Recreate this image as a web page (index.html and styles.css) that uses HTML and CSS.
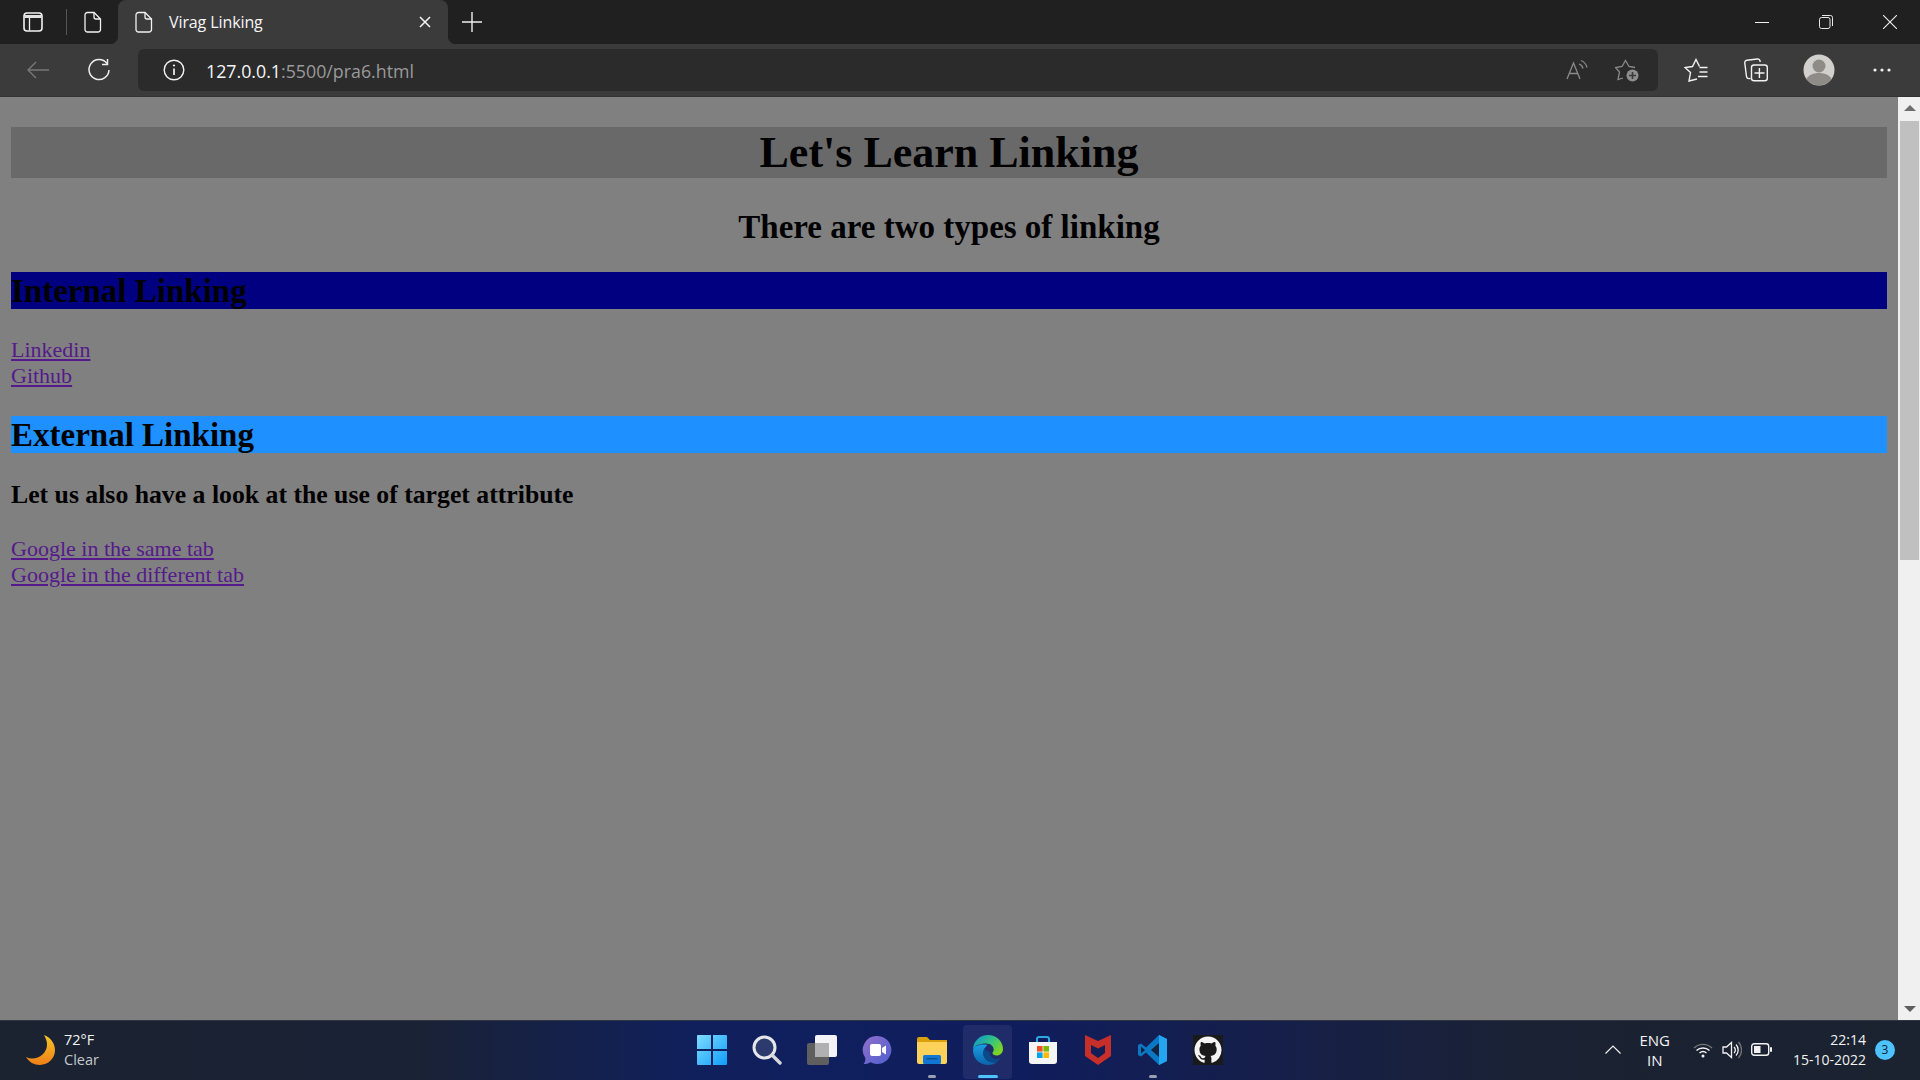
FILE: index.html
```html
<!DOCTYPE html>
<html lang="en">
<head>
    <meta charset="UTF-8">
    <title>Virag Linking</title>
    <link rel="stylesheet" href="styles.css">
</head>
<body>
    <div class="tabstrip">
        <div class="strip-icon side-icon">
            <svg width="20" height="20" viewBox="0 0 20 20" fill="none" stroke="#f2f2f2" stroke-width="1.600"><rect x="1" y="1" width="18" height="18" rx="3"/><path d="M1.500 4.500h17" stroke-width="3" stroke="#e2e2e2"/><path d="M6.500 6v12.500" stroke-width="1.300"/></svg>
        </div>
        <div class="strip-sep"></div>
        <div class="strip-icon page-icon">
            <svg width="18" height="22" viewBox="0 0 18 22" fill="none" stroke="#f2f2f2" stroke-width="1.300"><path d="M3.500 1.500h6.500l6.500 6.500v10.500a2.500 2.500 0 0 1-2.500 2.500h-10.500a2.500 2.500 0 0 1-2.500-2.500v-14.500a2.500 2.500 0 0 1 2.500-2.500z"/><path d="M10 1.500v4.500a2 2 0 0 0 2 2h4.500"/></svg>
        </div>
        <div class="tab">
            <svg width="18" height="22" viewBox="0 0 18 22" fill="none" stroke="#f2f2f2" stroke-width="1.300"><path d="M3.500 1.500h6.500l6.500 6.500v10.500a2.500 2.500 0 0 1-2.500 2.500h-10.500a2.500 2.500 0 0 1-2.500-2.500v-14.500a2.500 2.500 0 0 1 2.500-2.500z"/><path d="M10 1.500v4.500a2 2 0 0 0 2 2h4.500"/></svg>
            <span class="tab-title">Virag Linking</span>
            <svg class="tab-close" width="12" height="12" viewBox="0 0 12 12" stroke="#f5f5f5" stroke-width="1.500"><path d="M1 1l10 10M11 1l-10 10"/></svg>
        </div>
        <div class="new-tab">
            <svg width="20" height="20" viewBox="0 0 20 20" stroke="#f0f0f0" stroke-width="1.400"><path d="M10 0v20M0 10h20"/></svg>
        </div>
        <div class="window-controls">
            <svg width="14" height="14" viewBox="0 0 14 14" stroke="#f0f0f0"><path d="M0 7.500h14"/></svg>
            <svg width="14" height="14" viewBox="0 0 14 14" fill="none" stroke="#e8e8e8"><rect x=".5" y="2.500" width="10.500" height="11" rx="2"/><path d="M3 .5h8.500a2 2 0 0 1 2 2v8.500"/></svg>
            <svg width="14" height="14" viewBox="0 0 14 14" stroke="#f0f0f0" stroke-width="1.100"><path d="M0 0l14 14M14 0l-14 14"/></svg>
        </div>
    </div>

    <div class="toolbar">
        <div class="tool back">
            <svg width="24" height="20" viewBox="0 0 24 20" fill="none" stroke="#777" stroke-width="1.400"><path d="M23 10h-21M10 2l-8 8 8 8"/></svg>
        </div>
        <div class="tool refresh">
            <svg width="24" height="24" viewBox="0 0 24 24" fill="none" stroke="#efefef" stroke-width="1.500"><path d="M20 5.500a10 10 0 1 0 2 6.500"/><path d="M20.500 1v5.500h-5.500"/></svg>
        </div>
        <div class="address">
            <svg width="22" height="22" viewBox="0 0 22 22" fill="none" stroke="#f2f2f2" stroke-width="1.400"><circle cx="11" cy="11" r="9.800"/><path d="M11 9.500v6.500" stroke-width="1.700"/><circle cx="11" cy="6.500" r="1.100" fill="#f2f2f2" stroke="none"/></svg>
            <span class="url"><span class="url-host">127.0.0.1</span>:5500/pra6.html</span>
            <span class="address-icons">
                <svg width="22" height="22" viewBox="0 0 22 22" fill="none" stroke="#8a8a8a" stroke-width="1.300"><path d="M1 20l6.500-16 6.500 16M3.500 14.500h8"/><path d="M13 5a6 6 0 0 1 4 4.500M15 1.500a10 10 0 0 1 6 7"/></svg>
                <svg width="24" height="24" viewBox="0 0 24 24" fill="none" stroke="#8a8a8a" stroke-width="1.300"><path d="M8 20l-5 1.500 1.500-7.500-4-4.500 6.500-1 3.500-6 3.500 6 6 1"/><circle cx="17.500" cy="17.500" r="6" fill="#8e8e8e" stroke="none"/><path d="M17.500 14v7M14 17.500h7" stroke="#3a3a3a" stroke-width="1.600"/></svg>
            </span>
        </div>
        <div class="tool fav">
            <svg width="24" height="24" viewBox="0 0 24 24" fill="none" stroke="#f2f2f2" stroke-width="1.400"><path d="M13 21l-8 2 1.500-8.500-5.500-5 7.500-1 3.500-7 3.500 7"/><path d="M15.500 9.500h8M15.500 14h8M14 18.500h9.500"/></svg>
        </div>
        <div class="tool coll">
            <svg width="24" height="24" viewBox="0 0 24 24" fill="none" stroke="#f2f2f2" stroke-width="1.400"><path d="M6.500 20.500l-1.500.1a2.500 2.500 0 0 1-2.500-2l-1.700-13.500a2.500 2.500 0 0 1 2-2.800l10.500-1.300a2.500 2.500 0 0 1 2.800 2v1"/><rect x="7.500" y="7" width="15.800" height="15.800" rx="2.500"/><path d="M15.400 10v10M10.500 15h10"/></svg>
        </div>
        <div class="tool profile">
            <svg width="32" height="32" viewBox="0 0 32 32"><circle cx="16" cy="16" r="15.500" fill="#d2d0cc"/><circle cx="16" cy="12" r="6.500" fill="#8f8b87"/><path d="M3.500 25c2-4 7-6 12.500-6s10.500 2 12.500 6a15.500 15.500 0 0 1-25 0z" fill="#8f8b87"/></svg>
        </div>
        <div class="tool more">
            <svg width="18" height="4" viewBox="0 0 18 4" fill="#f0f0f0"><circle cx="2" cy="2" r="1.600"/><circle cx="9" cy="2" r="1.600"/><circle cx="16" cy="2" r="1.600"/></svg>
        </div>
    </div>

    <div class="viewport">
        <main class="page">
            <h1 class="page-title">Let's Learn Linking</h1>
            <h2 class="page-sub">There are two types of linking</h2>
            <h2 class="band band-internal">Internal Linking</h2>
            <div class="links links-social">
                <a href="#">Linkedin</a><br>
                <a href="#">Github</a>
            </div>
            <h2 class="band band-external">External Linking</h2>
            <h3 class="note">Let us also have a look at the use of target attribute</h3>
            <div class="links">
                <a href="#">Google in the same tab</a><br>
                <a href="#">Google in the different tab</a>
            </div>
        </main>
        <div class="scrollbar">
            <div class="arrow arrow-up"></div>
            <div class="thumb-area"><div class="thumb"></div></div>
            <div class="arrow arrow-down"></div>
        </div>
    </div>

    <div class="taskbar">
        <div class="weather">
            <svg width="32" height="32" viewBox="0 0 32 32"><defs><linearGradient id="moon" x1="0" y1="0" x2="0" y2="1"><stop offset="0" stop-color="#f7c52a"/><stop offset="1" stop-color="#f07f17"/></linearGradient></defs><path d="M19 1c6 2 11 8 11 15a15 15 0 0 1-15 15c-6 0-11-3-14-8 2 1 4 1.500 6 1.500 8 0 15-6 15-14 0-3-1-6-3-9.500z" fill="url(#moon)"/></svg>
            <div class="weather-text">
                <div>72°F</div>
                <div class="weather-sub">Clear</div>
            </div>
        </div>

        <div class="task-icons">
            <div class="task-cell">
                <svg width="30" height="30" viewBox="0 0 30 30"><defs><linearGradient id="win" x1="0" y1="0" x2="1" y2="1"><stop offset="0" stop-color="#7fdcff"/><stop offset="1" stop-color="#0f9dfa"/></linearGradient></defs><path d="M1 0h13v14h-14v-13a1 1 0 0 1 1-1zM16 0h13a1 1 0 0 1 1 1v13h-14zM0 16h14v14h-13a1 1 0 0 1-1-1zM16 16h14v13a1 1 0 0 1-1 1h-13z" fill="url(#win)"/></svg>
            </div>
            <div class="task-cell">
                <svg width="30" height="30" viewBox="0 0 30 30"><circle cx="12.500" cy="12.500" r="10.500" fill="#2c3a6e" stroke="#e4e6ea" stroke-width="3"/><path d="M20 20l8 8" stroke="#d6d8dc" stroke-width="3.400" stroke-linecap="round"/></svg>
            </div>
            <div class="task-cell">
                <svg width="30" height="30" viewBox="0 0 30 30"><rect x="0" y="8" width="22" height="22" rx="2" fill="#5f5f5f"/><rect x="8" y="0" width="22" height="22" rx="2" fill="#f4f4f6"/><rect x="8" y="8" width="14" height="14" fill="#b0b0b2"/></svg>
            </div>
            <div class="task-cell">
                <svg width="30" height="30" viewBox="0 0 30 30"><defs><linearGradient id="chat" x1="0" y1="0" x2="1" y2="1"><stop offset="0" stop-color="#8f6fc9"/><stop offset="1" stop-color="#4f5fd0"/></linearGradient></defs><path d="M15.500 1a14 14 0 1 1-7 26.200c-2 1.300-4 1.800-7 1.800 1.500-1.500 2-3.500 1.800-6a14 14 0 0 1 12.200-22z" fill="url(#chat)"/><rect x="8" y="9" width="11" height="12" rx="2" fill="#fff"/><path d="M20 13l4-2.500v9l-4-2.500z" fill="#fff"/></svg>
            </div>
            <div class="task-cell has-dot">
                <svg width="30" height="30" viewBox="0 0 30 30"><path d="M0 4a2 2 0 0 1 2-2h8l3 3h17v20h-30z" fill="#dba10c"/><path d="M0 7h30v20a2 2 0 0 1-2 2h-26a2 2 0 0 1-2-2z" fill="#fdd25a"/><rect x="6" y="20" width="18" height="9" rx="1.500" fill="#1078d4"/><rect x="9.500" y="23" width="11" height="1.400" fill="#0c4f8c"/></svg>
            </div>
            <div class="task-cell task-active">
                <svg width="32" height="32" viewBox="0 0 32 32"><defs><linearGradient id="edgeA" x1="0" y1="0" x2="1" y2=".6"><stop offset="0" stop-color="#0c8fd8"/><stop offset=".6" stop-color="#33c481"/><stop offset="1" stop-color="#7ed321"/></linearGradient><linearGradient id="edgeB" x1="0" y1="0" x2="0" y2="1"><stop offset="0" stop-color="#1b9de2"/><stop offset="1" stop-color="#0b63ab"/></linearGradient></defs><path d="M1 16C1 7 8 1 16 1c8 0 15 6 15 14 0 4-3 6.500-6.500 6.500-2.500 0-4-1-4-2.500 0-1 1.200-1.500 1.200-3.500 0-3-3-6-7.500-6C7 9.500 1 12 1 16z" fill="url(#edgeA)"/><path d="M1 16c0 8.500 6.500 15 15 15 3.500 0 6.500-1 9-3-4 1-8.500 0-11-2.500-3-3-3.500-7.500-1.500-11 .8-1.300 1.800-2.500 3-3.500C8 9.500 1 12 1 16z" fill="url(#edgeB)"/><path d="M12.500 14.500c-2 3.500-1.500 8 1.500 11 2.500 2.500 7 3.500 11 2.500 1.500-1 3-2.500 4-4-3 1.500-6.500 1.500-9-.5-2-1.500-2.500-3.500-2-5.500-2.500-.5-4.500-2-5.500-3.500z" fill="#0a4a8a"/></svg>
            </div>
            <div class="task-cell">
                <svg width="30" height="30" viewBox="0 0 30 30"><path d="M9 7v-3a2 2 0 0 1 2-2h8a2 2 0 0 1 2 2v3" fill="none" stroke="#2fa8e0" stroke-width="2"/><path d="M1 7h28v19a3 3 0 0 1-3 3h-22a3 3 0 0 1-3-3z" fill="#f6f6f6"/><rect x="9" y="11" width="5.600" height="5.600" fill="#f25022"/><rect x="15.400" y="11" width="5.600" height="5.600" fill="#7fba00"/><rect x="9" y="17.400" width="5.600" height="5.600" fill="#00a4ef"/><rect x="15.400" y="17.400" width="5.600" height="5.600" fill="#ffb900"/></svg>
            </div>
            <div class="task-cell">
                <svg width="30" height="30" viewBox="0 0 30 30"><path fill-rule="evenodd" d="M2 0l13 6 13-6v21l-13 9-13-9zM8 10v8l7 5 7-5v-8l-7 3.500z" fill="#c62f2a"/></svg>
            </div>
            <div class="task-cell has-dot">
                <svg width="30" height="30" viewBox="0 0 30 30"><path d="M21 0l8 4v22l-8 4-13-12.500-5 4-3-1.500v-10l3-1.500 5 4z" fill="#0a78c4"/><path d="M21 0l8 4v22l-8 4z" fill="#23a5ef"/><path d="M21 8l-8 7 8 7z" fill="#14213f"/><path d="M3 11.500l4 3.500-4 3.500z" fill="#14213f"/></svg>
            </div>
            <div class="task-cell">
                <svg width="30" height="30" viewBox="0 0 30 30"><rect width="30" height="30" fill="#1a1a1a"/><g transform="translate(1.500 1.500) scale(1.690)"><path fill="#f4f4f4" d="M8 0C3.580 0 0 3.580 0 8c0 3.540 2.290 6.530 5.470 7.590.4.070.55-.17.550-.38 0-.19-.01-.82-.01-1.490-2.010.37-2.530-.49-2.690-.94-.09-.23-.48-.94-.82-1.130-.28-.15-.68-.52-.01-.53.630-.01 1.080.58 1.230.82.720 1.210 1.870.87 2.330.66.070-.52.280-.87.510-1.070-1.780-.2-3.640-.89-3.640-3.950 0-.87.310-1.590.820-2.150-.08-.2-.36-1.020.08-2.120 0 0 .67-.21 2.200.82.640-.18 1.320-.27 2-.27s1.360.09 2 .27c1.530-1.040 2.200-.82 2.200-.82.440 1.100.16 1.920.08 2.120.51.560.82 1.270.82 2.150 0 3.070-1.870 3.750-3.650 3.950.29.250.54.730.54 1.480 0 1.070-.01 1.930-.01 2.200 0 .21.150.46.550.38A8.010 8.010 0 0 0 16 8c0-4.420-3.580-8-8-8z"/></g></svg>
            </div>
        </div>

        <div class="tray">
            <svg class="tray-chevron" width="16" height="9" viewBox="0 0 16 9" fill="none" stroke="#efefef" stroke-width="1.200"><path d="M.5 8.500l7.500-7.500 7.500 7.500"/></svg>
            <div class="lang">ENG<br>IN</div>
            <svg class="tray-wifi" width="20" height="16" viewBox="0 0 20 16" fill="none"><path d="M1 6a13 13 0 0 1 18 0" stroke="#777" stroke-width="1.300"/><path d="M3.500 8.500a9.500 9.500 0 0 1 13 0M6.500 11a5.500 5.500 0 0 1 7 0" stroke="#f2f2f2" stroke-width="1.500"/><circle cx="10" cy="14" r="1.500" fill="#f2f2f2"/></svg>
            <svg class="tray-sound" width="20" height="18" viewBox="0 0 20 18" fill="none" stroke="#f2f2f2" stroke-width="1.300"><path d="M1 6h3.500l5-4.500v15l-5-4.500h-3.500z"/><path d="M12 6a4 4 0 0 1 0 6M14 3.500a8 8 0 0 1 0 11"/><path d="M16.500 1a12 12 0 0 1 0 16" stroke="#777"/></svg>
            <svg class="tray-battery" width="21" height="13" viewBox="0 0 21 13"><rect x=".7" y=".7" width="17" height="11.600" rx="2.500" fill="none" stroke="#f2f2f2" stroke-width="1.400"/><rect x="3" y="3" width="6.500" height="7" fill="#f2f2f2"/><rect x="19" y="4" width="2" height="5" rx="1" fill="#f2f2f2"/></svg>
            <div class="clock">22:14<br>15-10-2022</div>
            <div class="badge">3</div>
        </div>
    </div>
</body>
</html>
```
FILE: styles.css
```css
* {
    margin: 0;
    padding: 0;
    box-sizing: border-box;
}
html, body {
    height: 100%;
    overflow: hidden;
}
body {
    display: flex;
    flex-direction: column;
    background: #808080;
    font-family: "Open Sans", "Noto Sans", sans-serif;
}
svg {
    display: block;
    flex-shrink: 0;
}

/* tab strip */
.tabstrip {
    height: 44px;
    background: #202020;
    display: flex;
    align-items: center;
    flex-shrink: 0;
}
.strip-icon {
    display: flex;
    justify-content: center;
}
.side-icon {
    width: 66px;
}
.strip-sep {
    width: 1px;
    height: 26px;
    background: #555;
}
.page-icon {
    width: 51px;
}
.tab {
    width: 330px;
    height: 44px;
    background: #3b3b3b;
    border-radius: 8px 8px 0 0;
    display: flex;
    align-items: center;
    padding-left: 17px;
    position: relative;
}
.tab::before,
.tab::after {
    content: "";
    position: absolute;
    bottom: 0;
    width: 8px;
    height: 8px;
}
.tab::before {
    left: -8px;
    background: radial-gradient(circle at 0 0, transparent 8px, #3b3b3b 8.500px);
}
.tab::after {
    right: -8px;
    background: radial-gradient(circle at 100% 0, transparent 8px, #3b3b3b 8.500px);
}
.tab-title {
    margin-left: 16px;
    font-size: 16px;
    letter-spacing: -.1px;
    color: #f5f5f5;
    flex: 1;
}
.tab-close {
    margin-right: 17px;
}
.new-tab {
    margin-left: 14px;
}
.window-controls {
    margin-left: auto;
    display: flex;
    align-items: center;
    gap: 50px;
    padding-right: 23px;
}

/* toolbar */
.toolbar {
    height: 53px;
    background: #3b3b3b;
    border-bottom: 1px solid #333;
    display: flex;
    align-items: center;
    padding: 0 6px 0 16px;
    flex-shrink: 0;
}
.tool {
    height: 42px;
    display: flex;
    align-items: center;
    justify-content: center;
}
.back, .refresh {
    width: 44px;
}
.refresh {
    margin-left: 17px;
}
.address {
    width: 1520px;
    height: 42px;
    margin-left: 17px;
    margin-right: 8px;
    background: #2b2b2b;
    border-radius: 6px;
    display: flex;
    align-items: center;
    padding-left: 25px;
}
.url {
    margin-left: 21px;
    margin-top: 2px;
    font-size: 17.800px;
    color: #9a9a9a;
}
.url-host {
    color: #f5f5f5;
}
.address-icons {
    margin-left: auto;
    display: flex;
    align-items: center;
    gap: 27px;
    padding-right: 19px;
}
.fav, .coll {
    width: 60px;
}
.profile {
    width: 62px;
}
.more {
    width: 64px;
}
.coll {
    margin-right: 2px;
}

/* page */
.viewport {
    flex: 1;
    display: flex;
    min-height: 0;
}
.page {
    flex: 1;
    background: #808080;
    padding: 30px 11px 0;
    font-family: "Liberation Serif", "Times New Roman", serif;
    color: #000;
}
.page-title {
    height: 51px;
    line-height: 51px;
    font-size: 44px;
    text-align: center;
    background: #696969;
}
.page-sub {
    height: 37px;
    line-height: 39px;
    margin: 30px 0 27px;
    font-size: 33px;
    text-align: center;
}
.band {
    height: 37px;
    line-height: 39px;
    font-size: 33px;
}
.band-internal {
    background: #000080;
}
.band-external {
    background: #1e90ff;
}
.links {
    margin: 27px 0 28px;
    font-size: 22px;
    line-height: 26px;
}
.links-social {
    margin: 28px 0 27px;
}
.links a {
    color: #551a8b;
}
.note {
    height: 27px;
    line-height: 27px;
    margin: 28px 0;
    font-size: 25.740px;
}

/* scrollbar */
.scrollbar {
    width: 22px;
    background: #f0f0f0;
    display: flex;
    flex-direction: column;
    flex-shrink: 0;
}
.arrow {
    width: 0;
    height: 0;
    border-left: 6px solid transparent;
    border-right: 6px solid transparent;
    align-self: center;
    margin-left: 1px;
}
.arrow-up {
    margin-top: 8px;
    margin-bottom: 10px;
    border-bottom: 6px solid #6e6e6e;
}
.arrow-down {
    margin-top: 8px;
    margin-bottom: 8px;
    border-top: 6px solid #5e5e5e;
}
.thumb-area {
    flex: 1;
    padding-left: 2px;
    padding-right: 1px;
}
.thumb {
    height: 439px;
    background: #c0c0c0;
}

/* taskbar */
.taskbar {
    height: 60px;
    padding-bottom: 2px;
    background: linear-gradient(90deg, #1b2230 0%, #1a2236 22%, #10205c 36%, #0f1d5e 52%, #161f4a 66%, #1a2233 80%, #1b2230 100%);
    border-top: 1px solid #2e3440;
    display: grid;
    grid-template-columns: 1fr auto 1fr;
    align-items: center;
    color: #f2f2f2;
    font-family: "Open Sans", "Noto Sans", sans-serif;
    flex-shrink: 0;
}
.weather {
    display: flex;
    align-items: center;
    padding-left: 25px;
}
.weather-text {
    margin-left: 7px;
    font-size: 14.500px;
    line-height: 20px;
}
.weather-sub {
    color: #c4c8ce;
}
.task-icons {
    display: flex;
    height: 100%;
}
.task-cell {
    width: 55.200px;
    height: 100%;
    display: flex;
    align-items: center;
    justify-content: center;
    position: relative;
}
.has-dot::after {
    content: "";
    position: absolute;
    bottom: 0;
    left: 50%;
    margin-left: -4px;
    width: 8px;
    height: 3px;
    border-radius: 2px;
    background: #9aa0b4;
}
.task-active::before {
    content: "";
    position: absolute;
    top: 4px;
    left: 3px;
    right: 3px;
    bottom: -1px;
    background: rgba(255, 255, 255, .07);
    border-radius: 4px;
}
.task-active svg {
    position: relative;
}
.task-active::after {
    content: "";
    position: absolute;
    bottom: 0;
    left: 50%;
    margin-left: -10px;
    width: 20px;
    height: 3px;
    border-radius: 2px;
    background: #4cc2ff;
}
.tray {
    display: flex;
    align-items: center;
    justify-content: flex-end;
    padding-right: 25px;
    font-size: 14px;
    line-height: 20px;
}
.lang {
    font-size: 15px;
    margin-left: 18px;
    margin-right: 23px;
    text-align: center;
}
.tray-sound {
    margin-left: 9px;
}
.tray-battery {
    margin-left: 9px;
}
.clock {
    width: 94px;
    text-align: right;
}
.badge {
    width: 20px;
    height: 20px;
    margin-left: 9px;
    border-radius: 50%;
    background: #4cc2ff;
    color: #10202c;
    font-size: 12px;
    line-height: 20px;
    text-align: center;
}
```
